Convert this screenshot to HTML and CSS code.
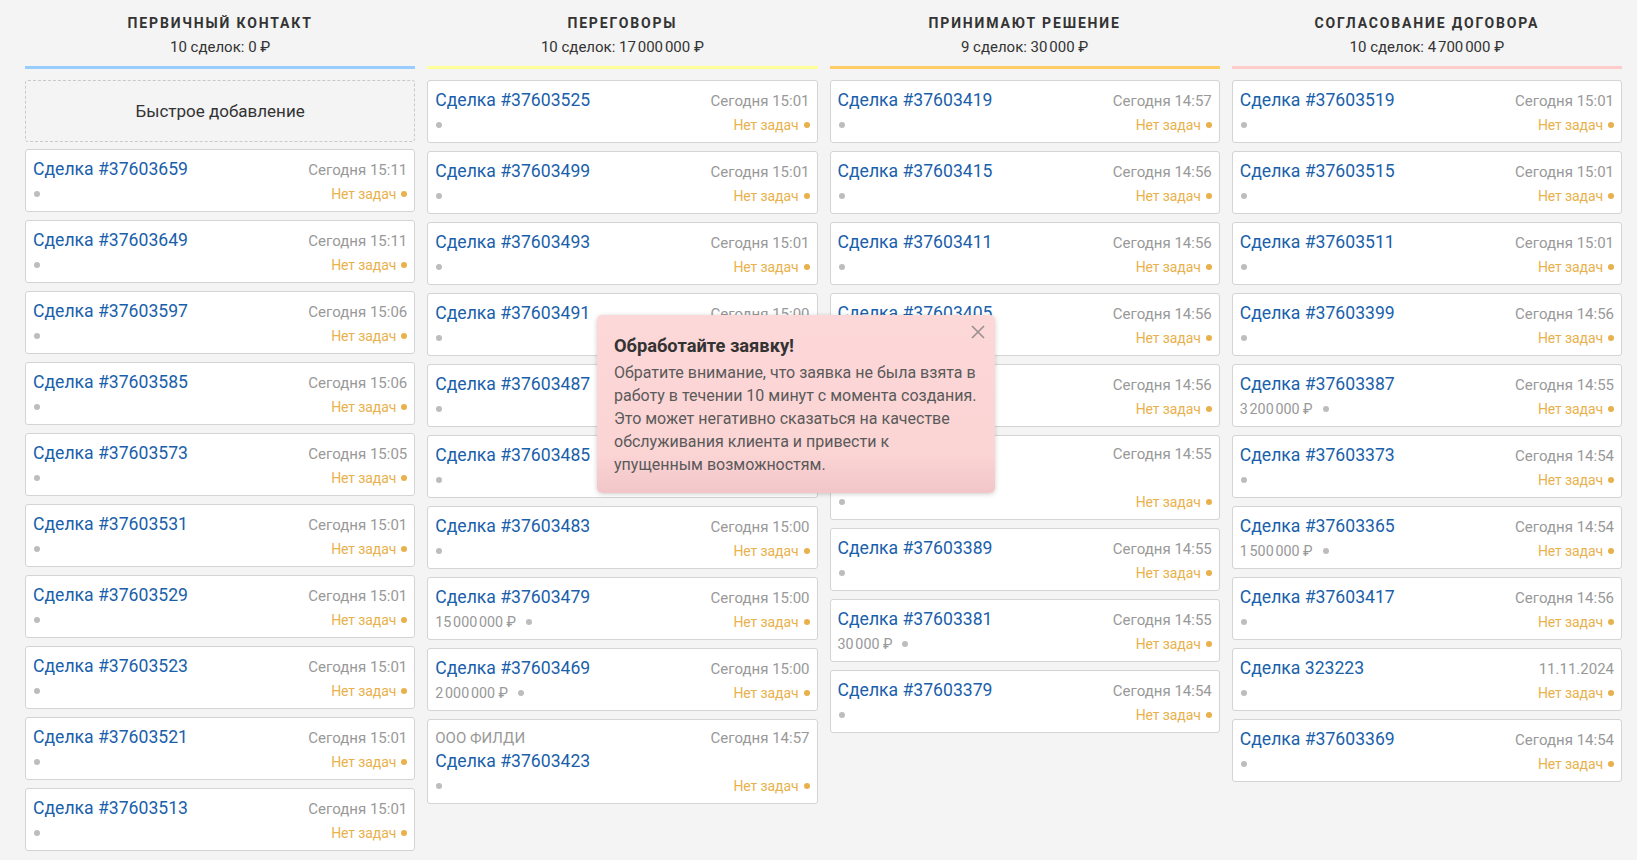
FILE: index.html
```html
<!DOCTYPE html>
<html lang="ru">
<head>
<meta charset="utf-8">
<title>Воронка</title>
<link rel="stylesheet" href="styles.css">
</head>
<body>
<div class="board">
  <section class="col">
    <header class="col-head c-blue">
      <div class="col-title">Первичный контакт</div>
      <div class="col-sum">10 сделок: 0 ₽</div>
    </header>
    <div class="quick">Быстрое добавление</div>
    <div class="card"><div class="row1"><a class="title">Сделка #37603659</a><span class="date">Сегодня 15:11</span></div><div class="row2"><span class="left"><i class="dot"></i></span><span class="tasks">Нет задач<i class="odot"></i></span></div></div>
    <div class="card"><div class="row1"><a class="title">Сделка #37603649</a><span class="date">Сегодня 15:11</span></div><div class="row2"><span class="left"><i class="dot"></i></span><span class="tasks">Нет задач<i class="odot"></i></span></div></div>
    <div class="card"><div class="row1"><a class="title">Сделка #37603597</a><span class="date">Сегодня 15:06</span></div><div class="row2"><span class="left"><i class="dot"></i></span><span class="tasks">Нет задач<i class="odot"></i></span></div></div>
    <div class="card"><div class="row1"><a class="title">Сделка #37603585</a><span class="date">Сегодня 15:06</span></div><div class="row2"><span class="left"><i class="dot"></i></span><span class="tasks">Нет задач<i class="odot"></i></span></div></div>
    <div class="card"><div class="row1"><a class="title">Сделка #37603573</a><span class="date">Сегодня 15:05</span></div><div class="row2"><span class="left"><i class="dot"></i></span><span class="tasks">Нет задач<i class="odot"></i></span></div></div>
    <div class="card"><div class="row1"><a class="title">Сделка #37603531</a><span class="date">Сегодня 15:01</span></div><div class="row2"><span class="left"><i class="dot"></i></span><span class="tasks">Нет задач<i class="odot"></i></span></div></div>
    <div class="card"><div class="row1"><a class="title">Сделка #37603529</a><span class="date">Сегодня 15:01</span></div><div class="row2"><span class="left"><i class="dot"></i></span><span class="tasks">Нет задач<i class="odot"></i></span></div></div>
    <div class="card"><div class="row1"><a class="title">Сделка #37603523</a><span class="date">Сегодня 15:01</span></div><div class="row2"><span class="left"><i class="dot"></i></span><span class="tasks">Нет задач<i class="odot"></i></span></div></div>
    <div class="card"><div class="row1"><a class="title">Сделка #37603521</a><span class="date">Сегодня 15:01</span></div><div class="row2"><span class="left"><i class="dot"></i></span><span class="tasks">Нет задач<i class="odot"></i></span></div></div>
    <div class="card"><div class="row1"><a class="title">Сделка #37603513</a><span class="date">Сегодня 15:01</span></div><div class="row2"><span class="left"><i class="dot"></i></span><span class="tasks">Нет задач<i class="odot"></i></span></div></div>
  </section>

  <section class="col">
    <header class="col-head c-yellow">
      <div class="col-title">Переговоры</div>
      <div class="col-sum">10 сделок: 17&#8239;000&#8239;000 ₽</div>
    </header>
    <div class="card"><div class="row1"><a class="title">Сделка #37603525</a><span class="date">Сегодня 15:01</span></div><div class="row2"><span class="left"><i class="dot"></i></span><span class="tasks">Нет задач<i class="odot"></i></span></div></div>
    <div class="card"><div class="row1"><a class="title">Сделка #37603499</a><span class="date">Сегодня 15:01</span></div><div class="row2"><span class="left"><i class="dot"></i></span><span class="tasks">Нет задач<i class="odot"></i></span></div></div>
    <div class="card"><div class="row1"><a class="title">Сделка #37603493</a><span class="date">Сегодня 15:01</span></div><div class="row2"><span class="left"><i class="dot"></i></span><span class="tasks">Нет задач<i class="odot"></i></span></div></div>
    <div class="card"><div class="row1"><a class="title">Сделка #37603491</a><span class="date">Сегодня 15:00</span></div><div class="row2"><span class="left"><i class="dot"></i></span><span class="tasks">Нет задач<i class="odot"></i></span></div></div>
    <div class="card"><div class="row1"><a class="title">Сделка #37603487</a><span class="date">Сегодня 15:00</span></div><div class="row2"><span class="left"><i class="dot"></i></span><span class="tasks">Нет задач<i class="odot"></i></span></div></div>
    <div class="card"><div class="row1"><a class="title">Сделка #37603485</a><span class="date">Сегодня 15:00</span></div><div class="row2"><span class="left"><i class="dot"></i></span><span class="tasks">Нет задач<i class="odot"></i></span></div></div>
    <div class="card"><div class="row1"><a class="title">Сделка #37603483</a><span class="date">Сегодня 15:00</span></div><div class="row2"><span class="left"><i class="dot"></i></span><span class="tasks">Нет задач<i class="odot"></i></span></div></div>
    <div class="card"><div class="row1"><a class="title">Сделка #37603479</a><span class="date">Сегодня 15:00</span></div><div class="row2"><span class="left"><span class="price">15&#8239;000&#8239;000 ₽</span><i class="dot"></i></span><span class="tasks">Нет задач<i class="odot"></i></span></div></div>
    <div class="card"><div class="row1"><a class="title">Сделка #37603469</a><span class="date">Сегодня 15:00</span></div><div class="row2"><span class="left"><span class="price">2&#8239;000&#8239;000 ₽</span><i class="dot"></i></span><span class="tasks">Нет задач<i class="odot"></i></span></div></div>
    <div class="card tall"><div class="row1"><span class="company">ООО ФИЛДИ</span><span class="date">Сегодня 14:57</span></div><div class="row-title"><a class="title">Сделка #37603423</a></div><div class="row2"><span class="left"><i class="dot"></i></span><span class="tasks">Нет задач<i class="odot"></i></span></div></div>
  </section>

  <section class="col">
    <header class="col-head c-orange">
      <div class="col-title">Принимают решение</div>
      <div class="col-sum">9 сделок: 30&#8239;000 ₽</div>
    </header>
    <div class="card"><div class="row1"><a class="title">Сделка #37603419</a><span class="date">Сегодня 14:57</span></div><div class="row2"><span class="left"><i class="dot"></i></span><span class="tasks">Нет задач<i class="odot"></i></span></div></div>
    <div class="card"><div class="row1"><a class="title">Сделка #37603415</a><span class="date">Сегодня 14:56</span></div><div class="row2"><span class="left"><i class="dot"></i></span><span class="tasks">Нет задач<i class="odot"></i></span></div></div>
    <div class="card"><div class="row1"><a class="title">Сделка #37603411</a><span class="date">Сегодня 14:56</span></div><div class="row2"><span class="left"><i class="dot"></i></span><span class="tasks">Нет задач<i class="odot"></i></span></div></div>
    <div class="card"><div class="row1"><a class="title">Сделка #37603405</a><span class="date">Сегодня 14:56</span></div><div class="row2"><span class="left"><i class="dot"></i></span><span class="tasks">Нет задач<i class="odot"></i></span></div></div>
    <div class="card"><div class="row1"><a class="title">Сделка #37603401</a><span class="date">Сегодня 14:56</span></div><div class="row2"><span class="left"><i class="dot"></i></span><span class="tasks">Нет задач<i class="odot"></i></span></div></div>
    <div class="card tall"><div class="row1"><span class="company">ООО ФИЛДИ</span><span class="date">Сегодня 14:55</span></div><div class="row-title"><a class="title">Сделка #37603395</a></div><div class="row2"><span class="left"><i class="dot"></i></span><span class="tasks">Нет задач<i class="odot"></i></span></div></div>
    <div class="card"><div class="row1"><a class="title">Сделка #37603389</a><span class="date">Сегодня 14:55</span></div><div class="row2"><span class="left"><i class="dot"></i></span><span class="tasks">Нет задач<i class="odot"></i></span></div></div>
    <div class="card"><div class="row1"><a class="title">Сделка #37603381</a><span class="date">Сегодня 14:55</span></div><div class="row2"><span class="left"><span class="price">30&#8239;000 ₽</span><i class="dot"></i></span><span class="tasks">Нет задач<i class="odot"></i></span></div></div>
    <div class="card"><div class="row1"><a class="title">Сделка #37603379</a><span class="date">Сегодня 14:54</span></div><div class="row2"><span class="left"><i class="dot"></i></span><span class="tasks">Нет задач<i class="odot"></i></span></div></div>
  </section>

  <section class="col">
    <header class="col-head c-pink">
      <div class="col-title">Согласование договора</div>
      <div class="col-sum">10 сделок: 4&#8239;700&#8239;000 ₽</div>
    </header>
    <div class="card"><div class="row1"><a class="title">Сделка #37603519</a><span class="date">Сегодня 15:01</span></div><div class="row2"><span class="left"><i class="dot"></i></span><span class="tasks">Нет задач<i class="odot"></i></span></div></div>
    <div class="card"><div class="row1"><a class="title">Сделка #37603515</a><span class="date">Сегодня 15:01</span></div><div class="row2"><span class="left"><i class="dot"></i></span><span class="tasks">Нет задач<i class="odot"></i></span></div></div>
    <div class="card"><div class="row1"><a class="title">Сделка #37603511</a><span class="date">Сегодня 15:01</span></div><div class="row2"><span class="left"><i class="dot"></i></span><span class="tasks">Нет задач<i class="odot"></i></span></div></div>
    <div class="card"><div class="row1"><a class="title">Сделка #37603399</a><span class="date">Сегодня 14:56</span></div><div class="row2"><span class="left"><i class="dot"></i></span><span class="tasks">Нет задач<i class="odot"></i></span></div></div>
    <div class="card"><div class="row1"><a class="title">Сделка #37603387</a><span class="date">Сегодня 14:55</span></div><div class="row2"><span class="left"><span class="price">3&#8239;200&#8239;000 ₽</span><i class="dot"></i></span><span class="tasks">Нет задач<i class="odot"></i></span></div></div>
    <div class="card"><div class="row1"><a class="title">Сделка #37603373</a><span class="date">Сегодня 14:54</span></div><div class="row2"><span class="left"><i class="dot"></i></span><span class="tasks">Нет задач<i class="odot"></i></span></div></div>
    <div class="card"><div class="row1"><a class="title">Сделка #37603365</a><span class="date">Сегодня 14:54</span></div><div class="row2"><span class="left"><span class="price">1&#8239;500&#8239;000 ₽</span><i class="dot"></i></span><span class="tasks">Нет задач<i class="odot"></i></span></div></div>
    <div class="card"><div class="row1"><a class="title">Сделка #37603417</a><span class="date">Сегодня 14:56</span></div><div class="row2"><span class="left"><i class="dot"></i></span><span class="tasks">Нет задач<i class="odot"></i></span></div></div>
    <div class="card"><div class="row1"><a class="title">Сделка 323223</a><span class="date">11.11.2024</span></div><div class="row2"><span class="left"><i class="dot"></i></span><span class="tasks">Нет задач<i class="odot"></i></span></div></div>
    <div class="card"><div class="row1"><a class="title">Сделка #37603369</a><span class="date">Сегодня 14:54</span></div><div class="row2"><span class="left"><i class="dot"></i></span><span class="tasks">Нет задач<i class="odot"></i></span></div></div>
  </section>
</div>

<div class="notice">
  <button class="notice-close" aria-label="Закрыть">
    <svg width="14" height="14" viewBox="0 0 14 14"><path d="M1 1L13 13M13 1L1 13" stroke="#9a8e8f" stroke-width="1.6" fill="none"/></svg>
  </button>
  <div class="notice-title">Обработайте заявку!</div>
  <div class="notice-text">Обратите внимание, что заявка не была взята в<br>работу в течении 10 минут с момента создания.<br>Это может негативно сказаться на качестве<br>обслуживания клиента и привести к<br>упущенным возможностям.</div>
</div>
</body>
</html>
```

FILE: styles.css
```css
html, body {
  margin: 0;
  padding: 0;
}
body {
  background: #f4f4f4;
  font-family: Roboto, "Noto Sans", sans-serif;
  color: #333;
  position: relative;
  height: 860px;
  overflow: hidden;
}
.board {
  display: grid;
  grid-template-columns: repeat(4, 1fr);
  column-gap: 12px;
  padding: 0 15px 0 25px;
}
.col-head {
  text-align: center;
  padding-top: 13px;
  padding-bottom: 9px;
  border-bottom: 3px solid #99ccff;
  margin-bottom: 11px;
}
.c-blue { border-bottom-color: #99ccff; }
.c-yellow { border-bottom-color: #ffff99; }
.c-orange { border-bottom-color: #ffcc66; }
.c-pink { border-bottom-color: #ffcccc; }
.col-title {
  font-size: 14px;
  font-weight: 700;
  text-transform: uppercase;
  letter-spacing: 1.85px;
  line-height: 20px;
  color: #333;
}
.col-sum {
  font-size: 15px;
  line-height: 20px;
  margin-top: 4px;
  color: #333;
}
.quick {
  height: 60px;
  border: 1px dashed #c9c9c9;
  border-radius: 3px;
  display: flex;
  align-items: center;
  justify-content: center;
  font-size: 17px;
  color: #333;
  margin-bottom: 7px;
}
.card {
  background: #fff;
  border: 1px solid #d4d4d4;
  border-radius: 3px;
  padding: 6px 7px 5px 7px;
  margin-bottom: 8px;
}
.row1 {
  display: flex;
  justify-content: space-between;
  align-items: baseline;
  height: 26px;
  line-height: 26px;
}
.title {
  font-size: 17.6px;
  color: #1a5fab;
  text-decoration: none;
  white-space: nowrap;
}
.date {
  font-size: 15px;
  color: #999;
}
.row2 {
  display: flex;
  justify-content: space-between;
  align-items: center;
  height: 24px;
  line-height: 24px;
  font-size: 14px;
}
.left {
  display: flex;
  align-items: center;
}
.price {
  color: #999;
  font-size: 14.3px;
  margin-right: 9px;
}
.dot {
  display: inline-block;
  width: 6px;
  height: 6px;
  border-radius: 50%;
  background: #bdbdbd;
  margin-left: 1px;
}
.tasks {
  display: flex;
  align-items: center;
  color: #e9b14c;
  font-size: 14px;
  letter-spacing: -0.1px;
}
.odot {
  display: inline-block;
  width: 6px;
  height: 6px;
  border-radius: 50%;
  background: #e9b14c;
  margin-left: 5px;
}
.tall .row1 {
  height: 24px;
  line-height: 24px;
}
.company {
  font-size: 15px;
  color: #999;
}
.row-title {
  height: 22px;
  line-height: 22px;
}
.tall .row2 {
  margin-top: 2px;
}
.notice {
  position: absolute;
  left: 597px;
  top: 315px;
  width: 398px;
  height: 178px;
  box-sizing: border-box;
  padding: 20px 17px 0 17px;
  background: linear-gradient(180deg, #fdd8d8 0%, #fbd4d4 78%, #f2c6c9 100%);
  border-radius: 5px;
  box-shadow: 0 1px 5px rgba(0,0,0,0.2);
}
.notice-close {
  position: absolute;
  right: 9px;
  top: 9px;
  width: 16px;
  height: 16px;
  padding: 1px;
  border: 0;
  background: transparent;
}
.notice-title {
  font-size: 18.3px;
  font-weight: 700;
  line-height: 22px;
  color: #333;
  margin-bottom: 4px;
}
.notice-text {
  font-size: 16px;
  line-height: 23px;
  color: #5a5a5a;
  white-space: nowrap;
}
```
